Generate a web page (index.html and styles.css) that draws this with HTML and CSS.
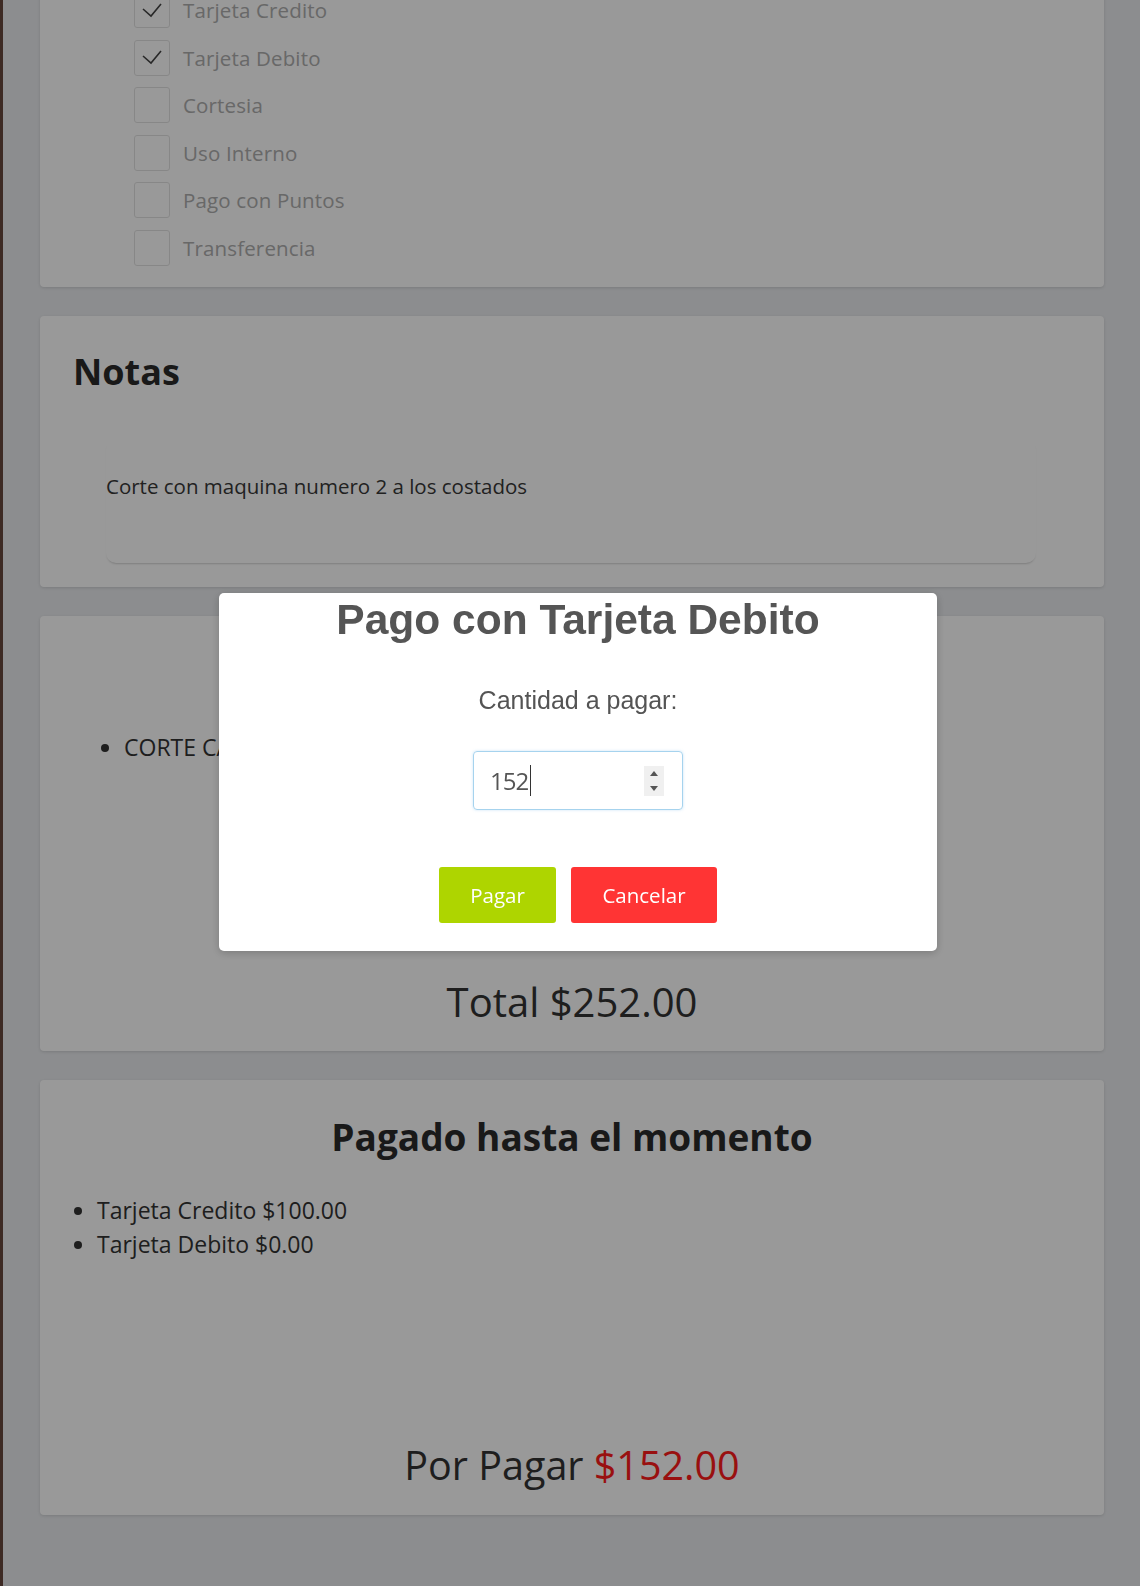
FILE: index.html
```html
<!DOCTYPE html>
<html lang="es">
<head>
<meta charset="utf-8">
<title>Pago con Tarjeta Debito</title>
<link rel="stylesheet" href="styles.css">
</head>
<body>
<main class="page">
  <section class="card card-methods">
    <ul class="methods">
      <li class="method"><span class="check checked"><svg viewBox="0 0 36 36" width="36" height="36"><path d="M9 17 L17 24 L27 12" fill="none" stroke="#444" stroke-width="1.6"/></svg></span><span class="method-label">Tarjeta Credito</span></li>
      <li class="method"><span class="check checked"><svg viewBox="0 0 36 36" width="36" height="36"><path d="M9 17 L17 24 L27 12" fill="none" stroke="#444" stroke-width="1.6"/></svg></span><span class="method-label">Tarjeta Debito</span></li>
      <li class="method"><span class="check"></span><span class="method-label">Cortesia</span></li>
      <li class="method"><span class="check"></span><span class="method-label">Uso Interno</span></li>
      <li class="method"><span class="check"></span><span class="method-label">Pago con Puntos</span></li>
      <li class="method"><span class="check"></span><span class="method-label">Transferencia</span></li>
    </ul>
  </section>

  <section class="card card-notes">
    <h2 class="notes-title">Notas</h2>
    <div class="notes-box">Corte con maquina numero 2 a los costados</div>
  </section>

  <section class="card card-services">
    <ul class="services">
      <li>CORTE CABALLERO</li>
    </ul>
    <p class="total">Total $252.00</p>
  </section>

  <section class="card card-paid">
    <h2 class="card-title">Pagado hasta el momento</h2>
    <ul class="paid">
      <li>Tarjeta Credito $100.00</li>
      <li>Tarjeta Debito $0.00</li>
    </ul>
    <p class="due">Por Pagar <span class="due-amount">$152.00</span></p>
  </section>
</main>

<div class="overlay">
  <div class="modal" role="dialog" aria-label="Pago con Tarjeta Debito">
    <h2 class="modal-title">Pago con Tarjeta Debito</h2>
    <p class="modal-label">Cantidad a pagar:</p>
    <div class="amount-field" role="spinbutton" aria-valuenow="152">
      <span class="amount-value">152</span><span class="caret"></span>
      <span class="spinner"><svg viewBox="0 0 20 30" width="20" height="30"><path d="M6 10 L10 5 L14 10 Z" fill="#555"/><path d="M6 20 L10 25 L14 20 Z" fill="#555"/></svg></span>
    </div>
    <div class="modal-actions">
      <button class="btn btn-pay" type="button">Pagar</button>
      <button class="btn btn-cancel" type="button">Cancelar</button>
    </div>
  </div>
</div>
</body>
</html>
```

FILE: styles.css
```css
html, body {
  margin: 0;
  padding: 0;
}
body {
  background: #e9ebee;
  border-left: 3px solid #66463c;
  font-family: "Open Sans", "DejaVu Sans", sans-serif;
  color: #333;
  min-height: 1586px;
  box-sizing: border-box;
  overflow: hidden;
}
.page {
  padding: 0 36px 80px 37px;
  display: flex;
  flex-direction: column;
  gap: 29px;
}
.card {
  background: #fff;
  border-radius: 4px;
  box-shadow: 0 1px 3px rgba(0,0,0,0.12);
}
.card-methods {
  margin-top: -28px;
  padding: 20px 0 21px 94px;
}
.methods {
  list-style: none;
  margin: 0;
  padding: 0;
  display: flex;
  flex-direction: column;
  gap: 11.5px;
}
.method {
  display: flex;
  align-items: center;
  gap: 13px;
  height: 36px;
}
.check {
  width: 36px;
  height: 36px;
  box-sizing: border-box;
  border: 1.5px solid #e2e2e2;
  border-radius: 3px;
  display: block;
  position: relative;
}
.check svg {
  position: absolute;
  left: -1.5px;
  top: -1.5px;
}
.method-label {
  font-size: 20.5px;
  letter-spacing: 0.15px;
  line-height: 36px;
  color: #adadad;
}
.card-notes {
  padding: 34px 35px 24px 33px;
}
.notes-title {
  margin: 0;
  font-size: 36px;
  line-height: 44px;
  font-weight: 700;
  color: #2b2b2b;
}
.notes-box {
  margin: 45px 33px 0 33px;
  padding: 33px 0 63px 0;
  font-size: 20.5px;
  line-height: 28px;
  color: #383838;
  border-radius: 10px;
  box-shadow: 0 2px 2px -1px rgba(0,0,0,0.18);
}
.card-services {
  padding: 114px 33px 23px 33px;
}
.card-title {
  margin: 0;
  text-align: center;
  font-size: 37px;
  line-height: 46px;
  font-weight: 700;
  color: #2b2b2b;
}
.services {
  margin: 0;
  padding: 0 0 0 51px;
  font-size: 23px;
  line-height: 34px;
  color: #333;
}
.total {
  margin: 212px 0 0 0;
  text-align: center;
  font-size: 40px;
  line-height: 52px;
  color: #333;
}
.card-paid {
  padding: 34px 33px 24px 33px;
}
.paid {
  margin: 33px 0 0 0;
  padding: 0 0 0 24px;
  font-size: 23px;
  line-height: 34px;
  color: #333;
}
.due {
  margin: 178px 0 0 0;
  text-align: center;
  font-size: 39.5px;
  line-height: 52px;
  color: #333;
}
.due-amount {
  color: #ff1c1c;
}

.overlay {
  position: fixed;
  inset: 0;
  background: rgba(0,0,0,0.4);
}
.modal {
  position: absolute;
  left: 219px;
  top: 593px;
  width: 718px;
  box-sizing: border-box;
  background: #fff;
  border-radius: 5px;
  box-shadow: 0 2px 8px rgba(0,0,0,0.2);
  padding: 3px 0 28px 0;
  display: flex;
  flex-direction: column;
  align-items: center;
}
.modal-title {
  margin: 0;
  font-family: "Liberation Sans", Arial, sans-serif;
  font-size: 42.5px;
  line-height: 48px;
  font-weight: 700;
  color: #555;
}
.modal-label {
  margin: 40.5px 0 0 0;
  font-family: "Liberation Sans", Arial, sans-serif;
  font-size: 25px;
  line-height: 30px;
  color: #545454;
}
.amount-field {
  margin-top: 36.5px;
  width: 210px;
  height: 59px;
  box-sizing: border-box;
  border: 1px solid #a6d3ee;
  border-radius: 4px;
  box-shadow: 0 0 3px rgba(102,175,233,0.35);
  display: flex;
  align-items: center;
  padding-left: 16px;
  position: relative;
}
.amount-value {
  font-size: 24px;
  letter-spacing: -1px;
  color: #555;
}
.caret {
  display: block;
  width: 1px;
  height: 31px;
  background: #333;
  margin-left: 2px;
}
.spinner {
  position: absolute;
  right: 18px;
  top: 14px;
  width: 20px;
  height: 30px;
  background: #f0f0f0;
  display: block;
}
.spinner svg {
  display: block;
}
.modal-actions {
  margin-top: 57px;
  display: flex;
  gap: 15px;
}
.btn {
  height: 56px;
  border: none;
  border-radius: 3px;
  font-family: "Open Sans", "DejaVu Sans", sans-serif;
  font-size: 20.5px;
  color: #fff;
  padding: 0;
}
.btn-pay {
  background: #aed500;
  width: 117px;
}
.btn-cancel {
  background: #ff3434;
  width: 146px;
}
```
